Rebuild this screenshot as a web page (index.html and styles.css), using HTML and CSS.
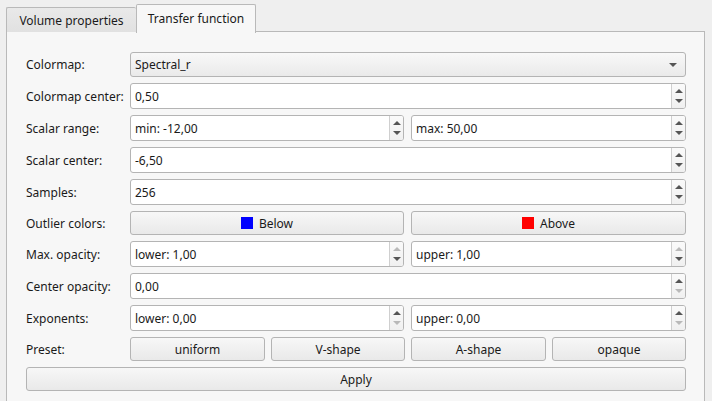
FILE: index.html
```html
<!DOCTYPE html>
<html>
<head>
<meta charset="utf-8">
<link rel="stylesheet" href="styles.css">
</head>
<body>
<div class="tabs">
  <div class="tab">Volume properties</div>
  <div class="tab active">Transfer function</div>
  <div class="tabfill"></div>
</div>
<div class="pane">
  <div class="form">
    <div class="label">Colormap:</div>
    <div class="combo"><span class="val">Spectral_r</span><span class="carrow"></span></div>

    <div class="label">Colormap center:</div>
    <div class="spin"><span class="val">0,50</span><div class="btns"><span class="up"></span><span class="dn"></span></div></div>

    <div class="label">Scalar range:</div>
    <div class="pair">
      <div class="spin"><span class="val">min: -12,00</span><div class="btns"><span class="up"></span><span class="dn"></span></div></div>
      <div class="spin"><span class="val">max: 50,00</span><div class="btns"><span class="up"></span><span class="dn"></span></div></div>
    </div>

    <div class="label">Scalar center:</div>
    <div class="spin"><span class="val">-6,50</span><div class="btns"><span class="up"></span><span class="dn"></span></div></div>

    <div class="label">Samples:</div>
    <div class="spin"><span class="val">256</span><div class="btns"><span class="up"></span><span class="dn"></span></div></div>

    <div class="label">Outlier colors:</div>
    <div class="pair">
      <div class="btn"><span class="swatch blue"></span>Below</div>
      <div class="btn"><span class="swatch red"></span>Above</div>
    </div>

    <div class="label">Max. opacity:</div>
    <div class="pair">
      <div class="spin"><span class="val">lower: 1,00</span><div class="btns"><span class="up off"></span><span class="dn"></span></div></div>
      <div class="spin"><span class="val">upper: 1,00</span><div class="btns"><span class="up off"></span><span class="dn"></span></div></div>
    </div>

    <div class="label">Center opacity:</div>
    <div class="spin"><span class="val">0,00</span><div class="btns"><span class="up"></span><span class="dn off"></span></div></div>

    <div class="label">Exponents:</div>
    <div class="pair">
      <div class="spin"><span class="val">lower: 0,00</span><div class="btns"><span class="up"></span><span class="dn off"></span></div></div>
      <div class="spin"><span class="val">upper: 0,00</span><div class="btns"><span class="up"></span><span class="dn off"></span></div></div>
    </div>

    <div class="label">Preset:</div>
    <div class="quad">
      <div class="btn">uniform</div>
      <div class="btn">V-shape</div>
      <div class="btn">A-shape</div>
      <div class="btn">opaque</div>
    </div>

    <div class="btn apply">Apply</div>
  </div>
</div>
</body>
</html>
```
FILE: styles.css
```css
* { box-sizing: border-box; }
html, body {
  margin: 0;
  padding: 0;
  background: #efefef;
  font-family: "Noto Sans", "DejaVu Sans", sans-serif;
  font-size: 12px;
  color: #1a1a1a;
  width: 712px;
  height: 401px;
  overflow: hidden;
}
.tabs {
  display: flex;
  align-items: flex-end;
  padding-left: 6px;
  height: 32px;
}
.tab {
  height: 25px;
  display: flex;
  align-items: center;
  justify-content: center;
  white-space: nowrap;
  border: 1px solid #b9b9b9;
  border-bottom: none;
  border-right: none;
  border-radius: 2px 2px 0 0;
  background: linear-gradient(#e9e9e9, #e1e1e1);
  width: 130px;
}
.tab.active {
  height: 29px;
  width: 120px;
  background: #f7f7f7;
  border-right: 1px solid #b9b9b9;
  margin-bottom: -1px;
  position: relative;
  z-index: 1;
  padding-bottom: 2px;
}
.tabfill { flex: 1; }
.pane {
  margin-top: -1px;
  margin-left: 6px;
  width: 699px;
  height: 380px;
  border: 1px solid #b9b9b9;
  background: #f7f7f7;
  padding: 20px 17px 0 19px;
}
.form {
  display: grid;
  grid-template-columns: 104px 556px;
  grid-template-rows: 25px 26px 26px 26px 26px 24px 26px 26px 26px 24px 24px;
  row-gap: 6px;
  align-items: center;
}
.label {
  white-space: nowrap;
}
.pair {
  display: grid;
  grid-template-columns: 274px 275px;
  column-gap: 7px;
  height: 100%;
}
.quad {
  display: grid;
  grid-template-columns: 135px 134px 135px 134px;
  column-gap: 6px;
  height: 100%;
}
.spin {
  height: 26px;
  background: #ffffff;
  border: 1px solid #b4b4b4;
  border-radius: 3px;
  display: flex;
  align-items: center;
  overflow: hidden;
}
.spin .val {
  flex: 1;
  padding-left: 4px;
  white-space: nowrap;
}
.btns {
  width: 14px;
  height: 100%;
  border-left: 1px solid #cfcfcf;
  display: flex;
  flex-direction: column;
  background: linear-gradient(#fafafa, #f0f0f0);
}
.btns span {
  flex: 1;
  display: flex;
  justify-content: center;
  align-items: center;
}
.btns .up::before {
  content: "";
  border-left: 4px solid transparent;
  border-right: 4px solid transparent;
  border-bottom: 4px solid #555;
  margin-top: 2px;
}
.btns .dn::before {
  content: "";
  border-left: 4px solid transparent;
  border-right: 4px solid transparent;
  border-top: 4px solid #555;
  margin-bottom: 2px;
}
.btns .up.off::before { border-bottom-color: #b9b9b9; }
.btns .dn.off::before { border-top-color: #b9b9b9; }
.combo {
  height: 25px;
  border: 1px solid #b4b4b4;
  border-radius: 3px;
  background: linear-gradient(#f8f8f8, #eaeaea);
  display: flex;
  align-items: center;
  padding: 0 8px 0 4px;
}
.combo .val { flex: 1; }
.carrow {
  border-left: 4px solid transparent;
  border-right: 4px solid transparent;
  border-top: 4px solid #555;
}
.btn {
  height: 24px;
  border: 1px solid #b4b4b4;
  border-radius: 3px;
  background: linear-gradient(#f7f7f7, #e9e9e9);
  display: flex;
  align-items: center;
  justify-content: center;
  white-space: nowrap;
}
.swatch {
  width: 12px;
  height: 12px;
  margin-right: 6px;
}
.swatch.blue { background: #0000ff; }
.swatch.red { background: #ff0000; }
.apply {
  grid-column: 1 / 3;
}
```
